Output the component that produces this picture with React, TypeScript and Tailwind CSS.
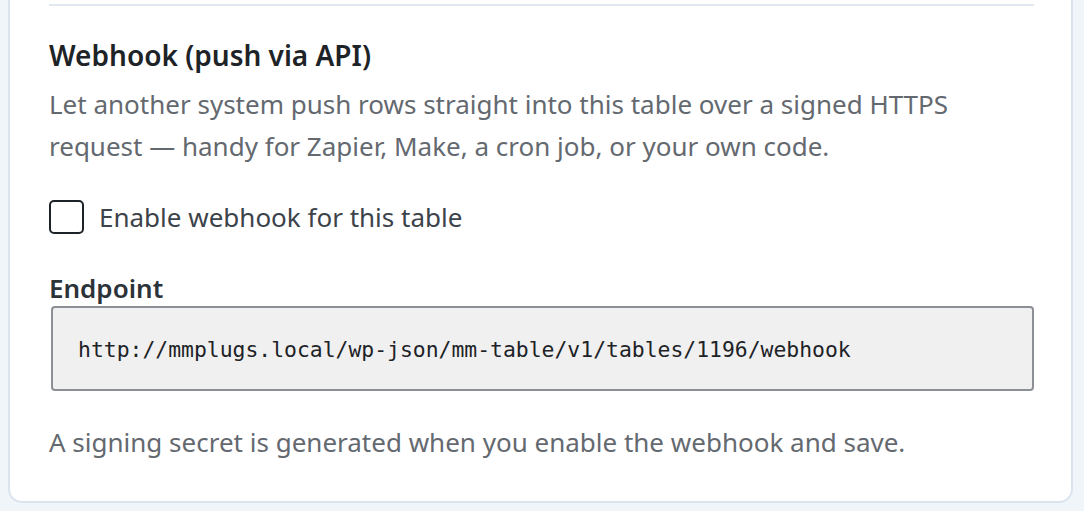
export default function App() {
  const font = { fontFamily: '"Noto Sans", "Open Sans", sans-serif' };
  return (
    <div className="h-[511px] w-[1084px] overflow-hidden bg-[#f0f5fa] pl-2 pr-[11px]" style={font}>
      <div className="flex h-[503px] flex-col rounded-b-[14px] border-x-2 border-b-2 border-[#dbe4ee] bg-white pl-[39px] pr-[37px]">
        <div className="mt-[4px] h-[2px] shrink-0 bg-[#e2e8f0]" />
        <h3 className="mt-[33px] text-[28px] font-semibold leading-[32px] text-[#1d2327]">
          Webhook (push via API)
        </h3>
        <p className="mt-[12px] text-[26px] leading-[42px] text-[#646970]">
          Let another system push rows straight into this table over a signed HTTPS request — handy for Zapier, Make, a cron job, or your own code.
        </p>
        <label className="mt-[33px] flex h-[34px] items-center gap-[15px] text-[26px] text-[#3c434a]">
          <span className="h-[34px] w-[35px] shrink-0 rounded-[5px] border-2 border-[#1d2327] bg-white" />
          Enable webhook for this table
        </label>
        <div className="mt-[38px] text-[26px] font-semibold leading-[32px] text-[#2c3338]">Endpoint</div>
        <div className="mt-[2px] ml-[2px] flex h-[85px] shrink-0 items-center rounded-[4px] border-2 border-[#8c8f94] bg-[#f0f0f0] px-[25px] pt-[3px]">
          <span className="text-[21.4px] text-[#1d2327]" style={{ fontFamily: '"DejaVu Sans Mono", "Liberation Mono", monospace' }}>
            http://mmplugs.local/wp-json/mm-table/v1/tables/1196/webhook
          </span>
        </div>
        <p className="mt-[30px] text-[26px] leading-[42px] text-[#646970]">
          A signing secret is generated when you enable the webhook and save.
        </p>
      </div>
    </div>
  );
}
